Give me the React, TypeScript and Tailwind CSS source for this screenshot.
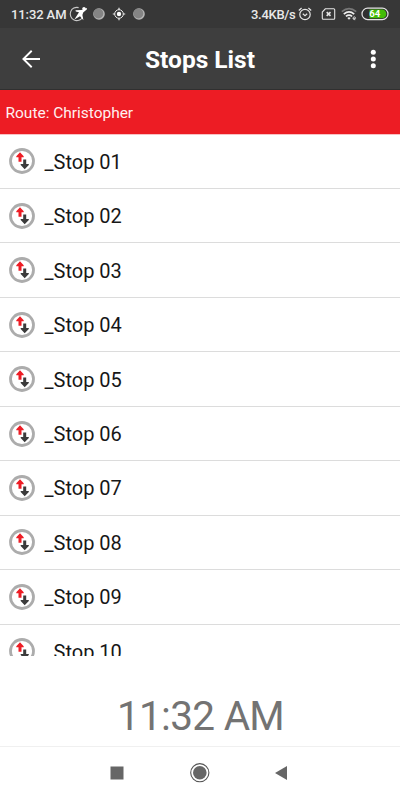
import React from "react";

const stops = ["01", "02", "03", "04", "05", "06", "07", "08", "09", "10"];

function RunnerIcon() {
  return (
    <svg width="19" height="18" viewBox="0 0 19 18" fill="none" className="shrink-0">
      <path d="M9.6 2.6A6.6 6.6 0 1 0 13.6 12.2" stroke="#c8c8c8" strokeWidth="1.1" />
      <circle cx="15" cy="3.6" r="1.7" fill="#fff" />
      <path d="M6.5 5.2L12.4 5L17.8 3L18 4.2L14.2 7.6L13.4 10L14.4 15.2L11 11.2L5.4 14.4L10 7.2L6.8 6.5Z" fill="#fff" />
    </svg>
  );
}

function Ball() {
  return (
    <svg width="14" height="14" viewBox="0 0 14 14" className="shrink-0">
      <circle cx="7" cy="7" r="5.8" fill="#b5b5b5" />
      <circle cx="6.4" cy="6.5" r="4.9" fill="#858585" />
    </svg>
  );
}

function Target() {
  return (
    <svg width="14" height="14" viewBox="0 0 14 14" fill="none" stroke="#eee" className="shrink-0">
      <circle cx="7" cy="7" r="4.3" strokeWidth="1" />
      <circle cx="7" cy="7" r="2.2" fill="#fff" stroke="none" />
      <path d="M7 .8v2M7 11.2v2M.8 7h2M11.2 7h2" strokeWidth="1.2" />
    </svg>
  );
}

function AlarmIcon() {
  return (
    <svg width="14" height="14" viewBox="0 0 14 14" fill="none" stroke="#e5e5e5" className="shrink-0">
      <circle cx="7" cy="7.5" r="5.2" strokeWidth="1.2" />
      <path d="M.8 3.5L3.6 1M13.2 3.5L10.4 1M4.8 6.8L7 8.6L9.2 6.8" strokeWidth="1.2" />
    </svg>
  );
}

function NoSimIcon() {
  return (
    <svg width="15" height="12" viewBox="0 0 14 12" fill="none" stroke="#e5e5e5" className="shrink-0">
      <path d="M3.8 .8H12.2Q13.2 .8 13.2 1.8V10.2Q13.2 11.2 12.2 11.2H1.8Q.8 11.2 .8 10.2V4Z" strokeWidth="1.1" />
      <path d="M5.2 4.1L9 7.9M9 4.1L5.2 7.9" strokeWidth="1.6" />
    </svg>
  );
}

function WifiIcon() {
  return (
    <svg width="17" height="14" viewBox="0 0 17 14" fill="none" className="shrink-0">
      <path d="M.8 4.6Q8 -1.2 15.2 4.6" stroke="#777" strokeWidth="1.7" />
      <path d="M2.8 7.1Q8 2.6 13.2 7.1" stroke="#eee" strokeWidth="1.7" />
      <path d="M4.9 9.4Q8 6.9 11.1 9.4" stroke="#eee" strokeWidth="1.7" />
      <path d="M6.3 10.9Q8 9.8 9.7 10.9L8 12.8Z" fill="#eee" />
      <path d="M12 11.4H14.6Q14.5 9.8 13.3 9.8Q12 9.9 12 11.4Q12.1 13 14.3 12.7" stroke="#ccc" strokeWidth="1" />
    </svg>
  );
}

function StopIcon() {
  return (
    <svg width="26" height="26" viewBox="0 0 26 26" className="shrink-0">
      <circle cx="13" cy="13" r="11.5" fill="#fff" stroke="#acacac" strokeWidth="2.8" />
      <path d="M11 4.2L14.7 8.2V9.2H12.5V13.8H9.5V9.2H7.3V8.2Z" fill="#ed1c24" />
      <path d="M14.2 11.6H17.2V16.1H19.8V17L15.7 21.2L11.7 17V16.1H14.2Z" fill="#3b3b3b" />
    </svg>
  );
}

function StatusBar() {
  return (
    <header className="flex h-7 shrink-0 items-center bg-[#373737] pl-[11px] pr-[11px] text-[13px] font-medium text-[#e9e9e9]">
      <span className="w-[58px] whitespace-nowrap pt-px tracking-[-0.1px]">11:32 AM</span>
      <RunnerIcon />
      <span className="ml-[4px] flex gap-[6px]">
        <Ball />
        <Target />
        <Ball />
      </span>
      <span className="ml-auto mr-[2px] w-[45px] whitespace-nowrap pt-px tracking-[-0.3px]">3.4KB/s</span>
      <AlarmIcon />
      <span className="ml-[9px] mr-[5px]"><NoSimIcon /></span>
      <WifiIcon />
      <svg width="28" height="14" viewBox="0 0 28 14" className="ml-[3px] shrink-0">
        <rect x="1" y="1.2" width="26" height="11.4" rx="5.7" fill="#303030" stroke="#e5e5e5" strokeWidth="1.2" />
        <path d="M8.5 2.6H21A4.3 4.3 0 0 1 21 11.2H8.5Z" fill="#43bd08" />
        <text x="13.8" y="10.4" textAnchor="middle" fontSize="9.5" fontWeight="700" fill="#fff">64</text>
      </svg>
    </header>
  );
}

export default function App() {
  return (
    <div className="flex h-[800px] w-[400px] flex-col overflow-hidden bg-white font-[Roboto,sans-serif]">
      <StatusBar />
      <div className="flex h-[62px] shrink-0 items-center justify-between border-b border-[#303030] bg-[#3e3e3e] pl-[22px] pr-[18px] text-white">
        <svg width="18" height="18" viewBox="0 0 18 18" fill="none" stroke="#fff" strokeWidth="1.9">
          <path d="M18 9H1.4M9.7 .8L1.4 9L9.7 17.2" />
        </svg>
        <h1 className="mr-1 pt-[3px] text-[24.5px] font-bold leading-7">Stops List</h1>
        <svg width="18" height="20" viewBox="0 0 18 20" fill="#fff">
          <circle cx="9.3" cy="3.3" r="2.5" />
          <circle cx="9.3" cy="10" r="2.5" />
          <circle cx="9.3" cy="16.7" r="2.5" />
        </svg>
      </div>
      <div className="flex h-[44.6px] shrink-0 items-center border-b border-[#f9c0c3] bg-[#ed1c24] pl-[5.5px] pt-[3px] text-[15.5px] tracking-[-0.02px] text-[#fff0f0]">
        Route: Christopher
      </div>
      <main className="h-[521.4px] shrink-0 overflow-hidden">
        {stops.map((stop) => (
          <div key={stop} className="flex h-[54.45px] items-center border-b border-[#dcdcdc] pl-[9px] text-[20px] text-[#171717]">
            <StopIcon />
            <span className="ml-[9.5px] pt-px">_Stop {stop}</span>
          </div>
        ))}
      </main>
      <div className="flex h-[91px] shrink-0 items-center justify-center border-b border-[#f0f0f0] pl-px pt-[30px] text-[40.5px] leading-none tracking-[-0.7px] text-[#737373]">
        11:32 AM
      </div>
      <nav className="flex h-[53px] items-center justify-between pl-[110px] pr-[112px]">
        <svg width="14" height="14" viewBox="0 0 14 14"><rect x=".5" y=".5" width="13" height="13" fill="#666" /></svg>
        <svg width="20" height="20" viewBox="0 0 20 20" fill="#666" className="ml-px">
          <circle cx="9.8" cy="9.7" r="9.1" fill="none" stroke="#555" strokeWidth="1.1" />
          <circle cx="9.8" cy="9.7" r="6.8" />
        </svg>
        <svg width="14" height="16" viewBox="0 0 14 16"><path d="M1 8L13 1V15Z" fill="#666" /></svg>
      </nav>
    </div>
  );
}
